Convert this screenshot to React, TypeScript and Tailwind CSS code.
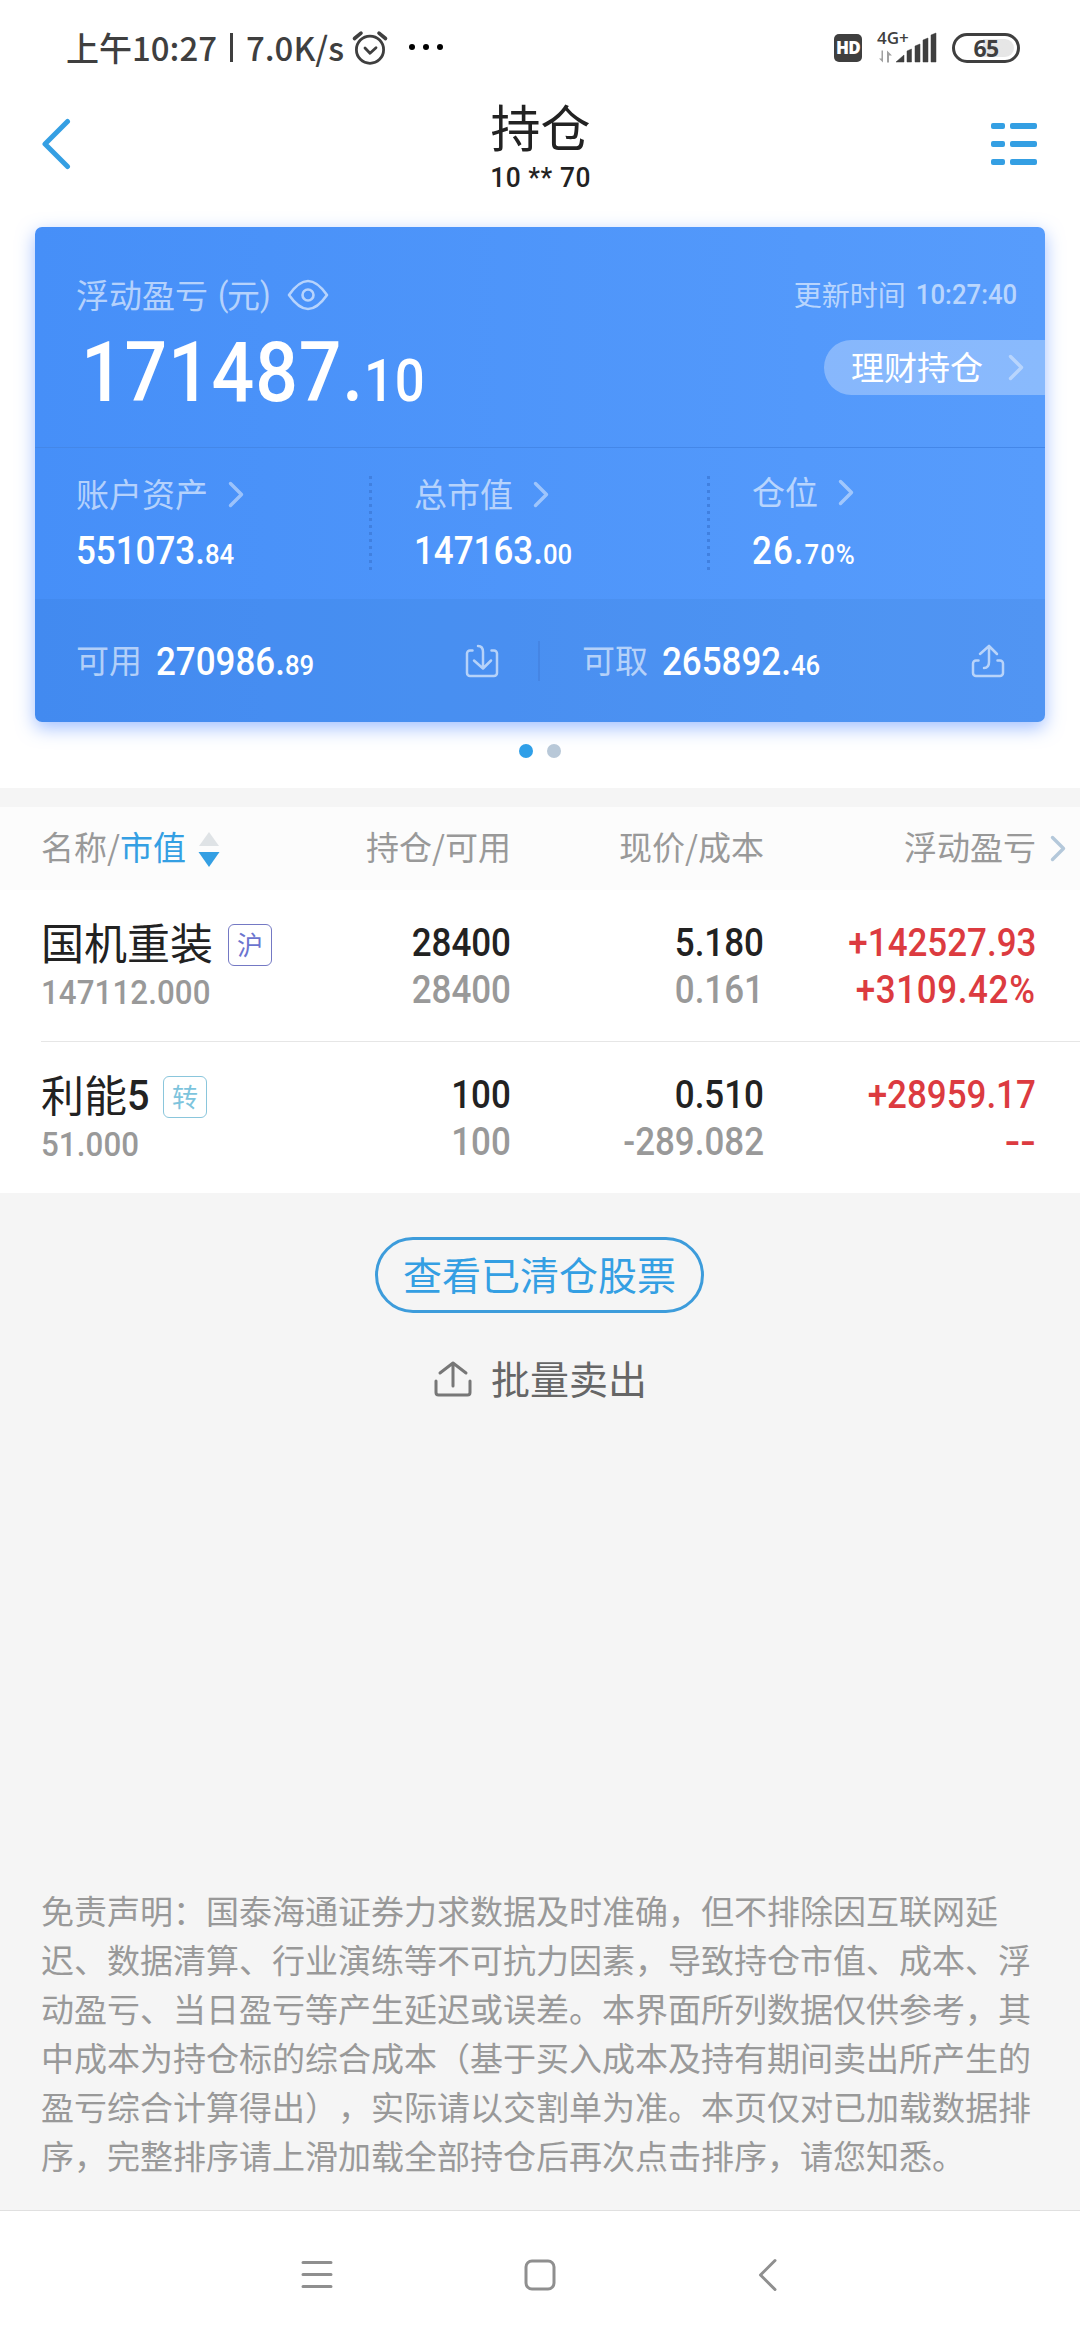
import type { ReactNode } from "react";
import clsx from "clsx";
import { twMerge } from "tailwind-merge";

type NumProps = { children: ReactNode; className?: string; right?: boolean };

// narrow DIN-like digits
function Num({ children, className, right }: NumProps) {
  return (
    <span
      className={twMerge(
        "inline-block scale-x-[0.92] font-[Roboto,sans-serif] font-medium whitespace-nowrap [font-kerning:none]",
        right ? "origin-right" : "origin-left",
        className
      )}
    >
      {children}
    </span>
  );
}

function Chevron({ className }: { className?: string }) {
  return (
    <svg viewBox="0 0 16 27" className={clsx("h-[27px] w-4 shrink-0", className)} fill="none" stroke="currentColor" strokeWidth="3.4" strokeLinecap="round" strokeLinejoin="round">
      <path d="M2.5 2.5L13.5 13.5L2.5 24.5" />
    </svg>
  );
}

function StatusBar() {
  return (
    <div className="flex h-24 items-start pt-[30px] text-[#3f3f3f]">
      <div className="-mt-px ml-[66px] flex h-9 w-[278px] items-center text-[33px] leading-9 font-medium whitespace-nowrap">
        <span>上午10:27</span>
        <span className="mx-[13px] h-[29px] w-[4px] bg-[#3f3f3f]" />
        <span>7.0K/s</span>
      </div>
      <svg viewBox="0 0 38 38" className="ml-[7px] h-[38px] w-[38px] shrink-0" fill="none" stroke="#3f3f3f" strokeWidth="2.8" strokeLinecap="round">
        <circle cx="19" cy="19.7" r="13.6" />
        <path d="M14 18l5 5.2l6-5.4" strokeLinejoin="round" />
        <path d="M3.5 8.5L10 3.2M28 3.2l6.5 5.3" strokeWidth="3.6" />
      </svg>
      <div className="mt-[14px] ml-5 flex gap-2">
        <span className="size-1.5 rounded-full bg-black" />
        <span className="size-1.5 rounded-full bg-black" />
        <span className="size-1.5 rounded-full bg-black" />
      </div>

      <div className="mt-1 mr-[60px] ml-auto flex">
        <div className="flex h-7 w-7 items-center justify-center rounded-[5px] bg-[#3f3f3f] font-['Open_Sans',sans-serif] text-[17px] font-extrabold tracking-tighter text-white">
          HD
        </div>
        <div className="-mt-[3px] ml-4 h-8 w-[58px]">
          <svg viewBox="0 0 58 32" className="h-8 w-[58px] overflow-visible">
            <text x="-1" y="12.5" fontSize="17" fontWeight="600" fill="#3f3f3f" fontFamily="Open Sans, sans-serif">4G+</text>
            <path d="M5 19.5V31.5L1 27.500H3.500V19.500ZM9 31.500V19.500L14 24.500H11V31.500Z" fill="#a0a0a0" />
            <path d="M18 31L26 24V31ZM29 20L33.500 18V31H29ZM37 15L42 13V31H37ZM45 9L50 7V31H45ZM53 4L58 2V31H53Z" fill="#3f3f3f" stroke="#3f3f3f" strokeWidth="0.500" strokeLinejoin="round" />
          </svg>
        </div>
        <div className="-mt-px ml-4 flex h-[30px] w-[68px] items-center rounded-full border-[3px] border-[#3f3f3f] p-[3px]">
          <div className="flex h-[18px] w-full items-center justify-center rounded-r-full bg-linear-to-r from-transparent from-45% to-[#e6e6e6] to-45% font-['Open_Sans',sans-serif] text-[23px] leading-none font-bold tracking-tight">
            65
          </div>
        </div>
      </div>
    </div>
  );
}

function NavBar() {
  return (
    <header className="flex h-[131px] justify-between pl-[41px] text-[#222]">
      <svg viewBox="0 0 30 54" className="mt-[21px] h-[54px] w-[30px]" fill="none" stroke="#349fe3" strokeWidth="5" strokeLinecap="round" strokeLinejoin="round">
        <path d="M26.500 4.500L4 27L26.500 49.500" />
      </svg>
      <div className="ml-[19px] flex flex-col items-center">
        <h1 className="h-[60px] text-[50px] leading-[58px]">持仓</h1>
        <span className="mt-2 scale-x-[0.94] font-[Roboto,sans-serif] text-[28px] leading-7 font-medium tracking-[0.6px]">
          10 ** 70
        </span>
      </div>
      <div className="mt-[27px] mr-[43px] flex flex-col gap-3">
        {[0, 1, 2].map((i) => (
          <div key={i} className="flex gap-[5px]">
            <span className="h-[6px] w-[14px] rounded-[2px] bg-[#349fe3]" />
            <span className="h-[6px] w-[27px] rounded-[2px] bg-[#349fe3]" />
          </div>
        ))}
      </div>
    </header>
  );
}

const stats = [
  { label: "账户资产", int: "551073.", dec: "84" },
  { label: "总市值", int: "147163.", dec: "00" },
  { label: "仓位", int: "26.", dec: "70%" },
];

function AssetCard() {
  return (
    <section className="mx-[35px] h-[495px] overflow-hidden rounded-[7px] bg-linear-to-r from-[#468ff8] to-[#579cfc] text-white shadow-[0_6px_18px_rgba(70,130,255,0.5)]">
      <div className="h-[220px] pt-[43px]">
        <div className="flex h-12 items-center pr-[28px] pl-[41px] text-white/60">
          <span className="text-[33px] leading-none">浮动盈亏</span>
          <Num className="ml-[10px] w-2 text-[33px] leading-none font-normal">(</Num>
          <span className="ml-px text-[33px] leading-none">元</span>
          <Num className="text-[33px] leading-none font-normal">)</Num>
          <svg viewBox="0 0 42 32" className="mt-[2px] ml-[15px] h-8 w-[42px]" fill="none" stroke="currentColor" strokeWidth="2.6">
            <path d="M2 16C9 6 15 2 21 2S33 6 40 16C33 26 27 30 21 30S9 26 2 16Z" strokeLinejoin="round" />
            <circle cx="21" cy="16" r="5.500" />
          </svg>
          <span className="ml-auto text-[28px] leading-none">更新时间</span>
          <Num right className="mt-px ml-[1px] text-[28px] leading-none">10:27:40</Num>
        </div>
        <div className="flex items-start justify-between">
          <Num className="mt-[13px] ml-[46px] scale-x-[0.895] text-[84px] leading-[84px] tracking-[0.9px]">
            171487.<span className="text-[59px]">10</span>
          </Num>
          <div className="mt-[22px] flex h-[55px] w-[221px] items-center justify-between rounded-l-full bg-white/30 pr-[21px] pl-[27px] text-[33px] leading-none">
            <span className="-mt-[3px]">理财持仓</span>
            <Chevron className="opacity-40" />
          </div>
        </div>
      </div>

      <div className="grid h-[152px] grid-cols-[337px_338px_1fr] border-t border-[#4487e8]">
        {stats.map((s, i) => (
          <div key={s.label} className={clsx("flex justify-between", i > 0 ? "pl-[42px]" : "pl-[41px]")}>
            <div className={i === 2 ? "pt-[23px]" : "pt-[25px]"}>
              <div className="flex h-10 items-center text-[33px] leading-none">
                <span className="text-white/60">{s.label}</span>
                <Chevron className="mt-[3px] ml-[20px] opacity-45" />
              </div>
              <Num className={clsx("text-[38px] leading-10", i === 2 ? "mt-[20px] tracking-[1.1px]" : "mt-[18px]")}>
                {s.int}
                <span className="text-[28px]">{s.dec}</span>
              </Num>
            </div>
            {i < 2 && (
              <div className="mt-[28px] h-[95px] w-[3px] bg-[repeating-linear-gradient(to_bottom,#4080e0_0_3px,transparent_3px_7px)]" />
            )}
          </div>
        ))}
      </div>

      <div className="flex h-[123px] items-center bg-[#2f6fc0]/15">
        <div className="flex h-[40px] w-[505px] items-center border-r-2 border-[#4585e4] pl-[41px]">
          <span className="-mt-0.5 text-[33px] leading-none text-white/60">可用</span>
          <Num className="mt-[3px] ml-[14px] text-[38px] leading-none">
            270986.<span className="text-[28px]">89</span>
          </Num>
          <svg viewBox="0 0 34 34" className="mr-[39px] ml-auto h-[34px] w-[34px] text-white/60" fill="none" stroke="currentColor" strokeWidth="2.500" strokeLinecap="round" strokeLinejoin="round">
            <path d="M7.500 6.500H5a3 3 0 0 0-3 3V29a3 3 0 0 0 3 3H29a3 3 0 0 0 3-3V9.500a3 3 0 0 0-3-3H26.500" />
            <path d="M13 2q5 0 5 6V24M9 16.500L18 24.500L26 16.500" />
          </svg>
        </div>
        <div className="flex flex-1 items-center pl-[42px]">
          <span className="-mt-0.5 text-[33px] leading-none text-white/60">可取</span>
          <Num className="mt-[3px] ml-[14px] text-[38px] leading-none">
            265892.<span className="text-[28px]">46</span>
          </Num>
          <svg viewBox="0 0 34 34" className="mr-[40px] ml-auto h-[34px] w-[34px] text-white/60" fill="none" stroke="currentColor" strokeWidth="2.500" strokeLinecap="round" strokeLinejoin="round">
            <path d="M7.500 16.500H5a3 3 0 0 0-3 3V29a3 3 0 0 0 3 3H29a3 3 0 0 0 3-3V19.500a3 3 0 0 0-3-3H26.500" />
            <path d="M13 24q5 0 5-6V2M9 10L18 2L26 10" />
          </svg>
        </div>
      </div>
    </section>
  );
}

const holdings = [
  {
    name: "国机重装",
    digit: "",
    tag: "沪",
    tagClass: "border-[#7479c4] text-[#6b74cf]",
    value: "147112.000",
    qty: "28400",
    avail: "28400",
    price: "5.180",
    cost: "0.161",
    profit: "+142527.93",
    rate: "+3109.42%",
    rateClass: "tracking-[0.7px]",
  },
  {
    name: "利能",
    digit: "5",
    tag: "转",
    tagClass: "border-[#8ac6dc] text-[#7dc4dd]",
    value: "51.000",
    qty: "100",
    avail: "100",
    price: "0.510",
    cost: "-289.082",
    profit: "+28959.17",
    rate: "--",
    rateClass: "scale-x-[1.2]",
  },
];

type PairProps = { top: string; bottom: string; className: string; bottomClass?: string };

function Pair({ top, bottom, className, bottomClass }: PairProps) {
  return (
    <div className={clsx("flex flex-col items-end pt-[30px] text-[38px] leading-[47px]", className)}>
      <Num right>{top}</Num>
      <Num right className={bottomClass}>{bottom}</Num>
    </div>
  );
}

function Holdings() {
  return (
    <section className="border-t-[19px] border-[#f5f5f5] bg-white">
      <div className="flex h-[83px] items-center bg-[#fcfcfc] pl-[41px] text-[33px] leading-none text-[#999]">
        <div className="-mt-1 flex w-[219px] items-center">
          名称/<span className="text-[#349fe3]">市值</span>
          <svg viewBox="0 0 22 38" className="mt-[5px] ml-3 h-[38px] w-[22px] shrink-0">
            <path d="M11 2L21 16H1Z" fill="#dfe3e6" strokeLinejoin="round" />
            <path d="M11 37L0.500 22H21.500Z" fill="#349fe3" />
          </svg>
        </div>
        <div className="-mt-1 w-[251px] text-right">持仓/可用</div>
        <div className="-mt-1 w-[253px] text-right">现价/成本</div>
        <div className="-mt-1 w-[272px] text-right">浮动盈亏</div>
        <Chevron className="ml-[14px] h-[25px] text-[#b4c8da]" />
      </div>
      {holdings.map((h, i) => (
        <div key={h.name} className={clsx("ml-[41px] flex", i > 0 ? "h-[152px] border-t border-[#e6e6e6]" : "h-[151px]")}>
          <div className="w-[240px] pt-[27px]">
            <div className="flex h-[52px] items-center text-[43px] leading-none whitespace-nowrap text-[#222]">
              <span className="-mt-1">{h.name}</span>
              {h.digit && <Num className="w-[21px]">{h.digit}</Num>}
              <span className={clsx("mt-1 ml-[15px] flex h-[42px] w-[44px] items-center justify-center rounded-md border-[1.500px] text-[26px] leading-none", h.tagClass)}>
                <span className="-mt-[3px]">{h.tag}</span>
              </span>
            </div>
            <Num className="mt-[3px] text-[34px] leading-10 tracking-[0.1px] text-[#999]">{h.value}</Num>
          </div>
          <Pair top={h.qty} bottom={h.avail} className="w-[230px] text-[#222]" bottomClass="text-[#999]" />
          <Pair top={h.price} bottom={h.cost} className="w-[253px] text-[#222]" bottomClass="text-[#999]" />
          <Pair top={h.profit} bottom={h.rate} className="w-[272px] text-[#dc3b40]" bottomClass={h.rateClass} />
        </div>
      ))}
    </section>
  );
}

const disclaimer = [
  "免责声明：国泰海通证券力求数据及时准确，但不排除因互联网延",
  "迟、数据清算、行业演练等不可抗力因素，导致持仓市值、成本、浮",
  "动盈亏、当日盈亏等产生延迟或误差。本界面所列数据仅供参考，其",
  "中成本为持仓标的综合成本（基于买入成本及持有期间卖出所产生的",
  "盈亏综合计算得出），实际请以交割单为准。本页仅对已加载数据排",
  "序，完整排序请上滑加载全部持仓后再次点击排序，请您知悉。",
];

export default function App() {
  return (
    <div lang="zh-CN" className="flex h-[2340px] w-[1080px] flex-col overflow-hidden bg-[#f5f5f5] font-['Noto_Sans_CJK_SC',sans-serif]">
      <div className="h-[788px] shrink-0 bg-white">
        <StatusBar />
        <NavBar />
        <AssetCard />
        <div className="mt-[22px] ml-[519px] flex gap-[14px]">
          <span className="size-[14px] rounded-full bg-[#2f9fe8]" />
          <span className="size-[14px] rounded-full bg-[#b8c8d8]" />
        </div>
      </div>

      <Holdings />

      <div className="flex flex-col items-center">
        <button className="mt-[44px] mr-px h-[76px] w-[329px] rounded-full border-[3px] border-[#3d9cdb] pb-1 text-[39px] leading-none text-[#349fe3]">
          查看已清仓股票
        </button>
        <button className="mt-[39px] ml-px flex h-[54px] items-center text-[39px] leading-none text-[#666]">
          <svg viewBox="0 0 38 36" className="mr-[19px] h-9 w-[38px]" fill="none" stroke="#777" strokeWidth="3" strokeLinecap="round" strokeLinejoin="round">
            <path d="M2 20V31.500a2.500 2.500 0 0 0 2.500 2.500H33.500a2.500 2.500 0 0 0 2.500-2.500V20" />
            <path d="M19 25V2M6 12L19 2L32 12" />
          </svg>
          <span className="-mt-1">批量卖出</span>
        </button>
      </div>

      <div className="mt-auto px-[41px] pb-[30px] text-[33px] leading-[49px] whitespace-nowrap text-[#999] [text-spacing-trim:space-all]">
        {disclaimer.map((line) => (
          <p key={line}>{line}</p>
        ))}
      </div>

      <div className="flex h-[130px] shrink-0 border-t border-[#e0e0e0] bg-white">
        <svg viewBox="0 0 1080 129" className="h-[129px] w-full" fill="none" stroke="#8f8f8f" strokeWidth="3" strokeLinecap="round" strokeLinejoin="round">
          <path d="M303 51.500H331M303 63.500H331M303 75.500H331" />
          <rect x="526" y="50" width="28" height="28" rx="6" />
          <path d="M775 49.500L760.500 64L775 78.500" />
        </svg>
      </div>
    </div>
  );
}
